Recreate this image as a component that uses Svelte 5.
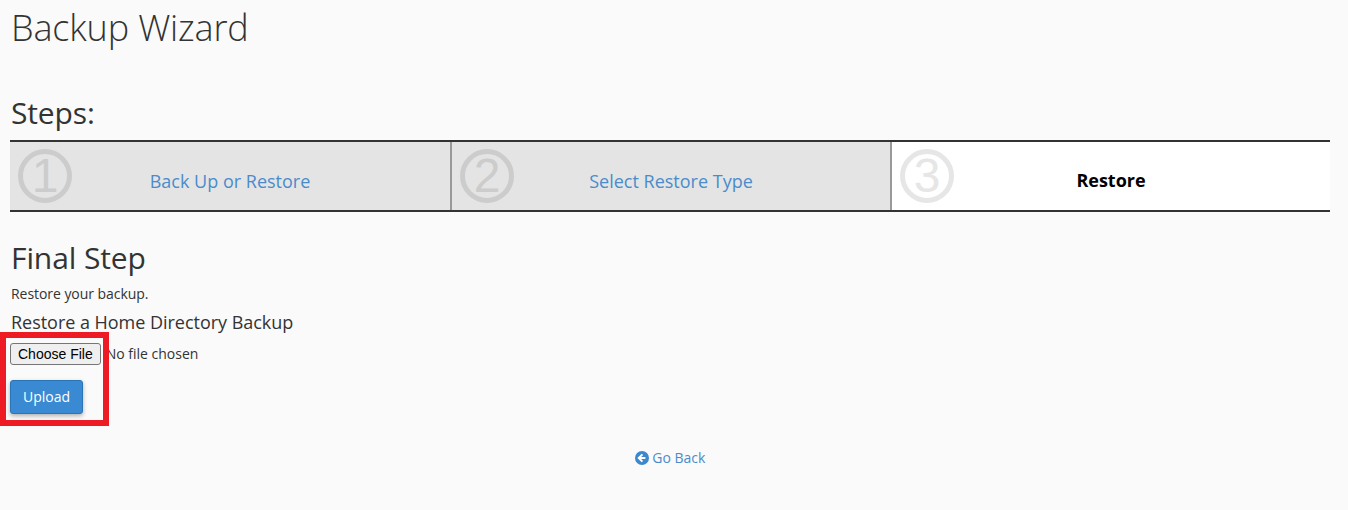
<script>
	const steps = [
		{ num: "1", label: "Back Up or Restore" },
		{ num: "2", label: "Select Restore Type" },
		{ num: "3", label: "Restore", active: true },
	];
</script>

<div class="page">
	<h1>Backup Wizard</h1>

	<h2 class="steps-title">Steps:</h2>
	<div class="steps">
		{#each steps as step}
			<div class="step" class:active={step.active}>
				<span class="num">{step.num}</span>
				{#if step.active}
					<strong>{step.label}</strong>
				{:else}
					<a href="#step">{step.label}</a>
				{/if}
			</div>
		{/each}
	</div>

	<h2 class="final">Final Step</h2>
	<p class="desc">Restore your backup.</p>
	<h3>Restore a Home Directory Backup</h3>

	<form class="upload">
		<input type="file" class="file" />
		<button type="button" class="btn">Upload</button>
		<div class="highlight"></div>
	</form>

	<div class="back">
		<a href="#back">
			<svg viewBox="0 0 14 14" width="14" height="14">
				<circle cx="7" cy="7" r="7" fill="#3d87cc" />
				<path d="M7.4 3.4 3.8 7l3.6 3.6M4.2 7h6.2" fill="none" stroke="#fff" stroke-width="2" />
			</svg>
			Go Back
		</a>
	</div>
</div>

<style>
	:global(body) {
		background: #fafafa;
		font-family: "Open Sans", sans-serif;
		color: #333;
	}

	.page {
		padding: 0 18px 0 10px;
		height: 510px;
		box-sizing: border-box;
		overflow: hidden;
	}

	h1 {
		margin: 0 0 0 1px;
		padding-top: 7px;
		font-size: 36px;
		line-height: 42px;
		font-weight: 300;
		letter-spacing: -0.15px;
	}

	.steps-title {
		margin: 44px 0 0 1px;
		font-size: 30px;
		line-height: 40px;
		font-weight: 400;
		letter-spacing: -0.15px;
	}

	.steps {
		display: flex;
		margin-top: 7px;
		height: 72px;
		box-sizing: border-box;
		border-top: 2px solid #333;
		border-bottom: 2px solid #333;
	}

	.step {
		width: 440px;
		display: flex;
		align-items: center;
		box-sizing: border-box;
		background: #e4e4e4;
		font-size: 18px;
	}

	.step + .step {
		border-left: 2px solid #999;
	}

	.step.active {
		background: #fff;
	}

	.num {
		width: 54px;
		height: 54px;
		margin-left: 8px;
		box-sizing: border-box;
		border: 5px solid #ccc;
		border-radius: 50%;
		display: flex;
		align-items: center;
		justify-content: center;
		font-family: "Liberation Sans", sans-serif;
		font-size: 48px;
		line-height: 1;
		color: #ccc;
		flex: none;
	}

	.active .num {
		border-color: #e6e6e6;
		color: #e6e6e6;
	}

	.step a,
	.step strong {
		flex: 1;
		text-align: center;
		margin-left: -62px;
		padding-top: 9px;
	}

	.step strong {
		color: #000;
		font-weight: 700;
		padding-top: 8px;
	}

	a {
		color: #4a8ccb;
		text-decoration: none;
	}

	.final {
		margin: 28px 0 0 1px;
		font-size: 30px;
		line-height: 36px;
		font-weight: 400;
		letter-spacing: -0.1px;
	}

	.desc {
		margin: 8px 0 0 1px;
		font-size: 14px;
		line-height: 20px;
		letter-spacing: -0.05px;
	}

	h3 {
		margin: 5px 0 0 1px;
		font-size: 18px;
		line-height: 26px;
		font-weight: 400;
		letter-spacing: -0.03px;
	}

	.upload {
		position: relative;
		margin-top: 8px;
	}

	.file {
		display: block;
		font-family: "Open Sans", sans-serif;
		font-size: 14px;
		color: #333;
		height: 22px;
	}

	.file::file-selector-button {
		font-family: "Liberation Sans", sans-serif;
		font-size: 14px;
		height: 22px;
		color: #000;
		margin-right: 5px;
		padding: 1px 7px;
		background: #efefef;
		border: 1px solid #767676;
		border-radius: 3px;
	}

	.btn {
		display: block;
		margin-top: 15px;
		width: 73px;
		height: 34px;
		padding-bottom: 3px;
		background: #398ad2;
		border: 1px solid #2a74b8;
		border-radius: 3px;
		box-shadow: 0 2px 4px rgba(0, 0, 0, 0.3);
		color: #fff;
		font-family: "Open Sans", sans-serif;
		font-size: 14px;
	}

	.highlight {
		position: absolute;
		left: -10px;
		top: -11px;
		width: 97px;
		height: 82px;
		border: 6px solid #ed1c24;
		pointer-events: none;
	}

	.back {
		margin-top: 34px;
		text-align: center;
		font-size: 14px;
		line-height: 20px;
	}

	.back svg {
		vertical-align: -2px;
	}
</style>
